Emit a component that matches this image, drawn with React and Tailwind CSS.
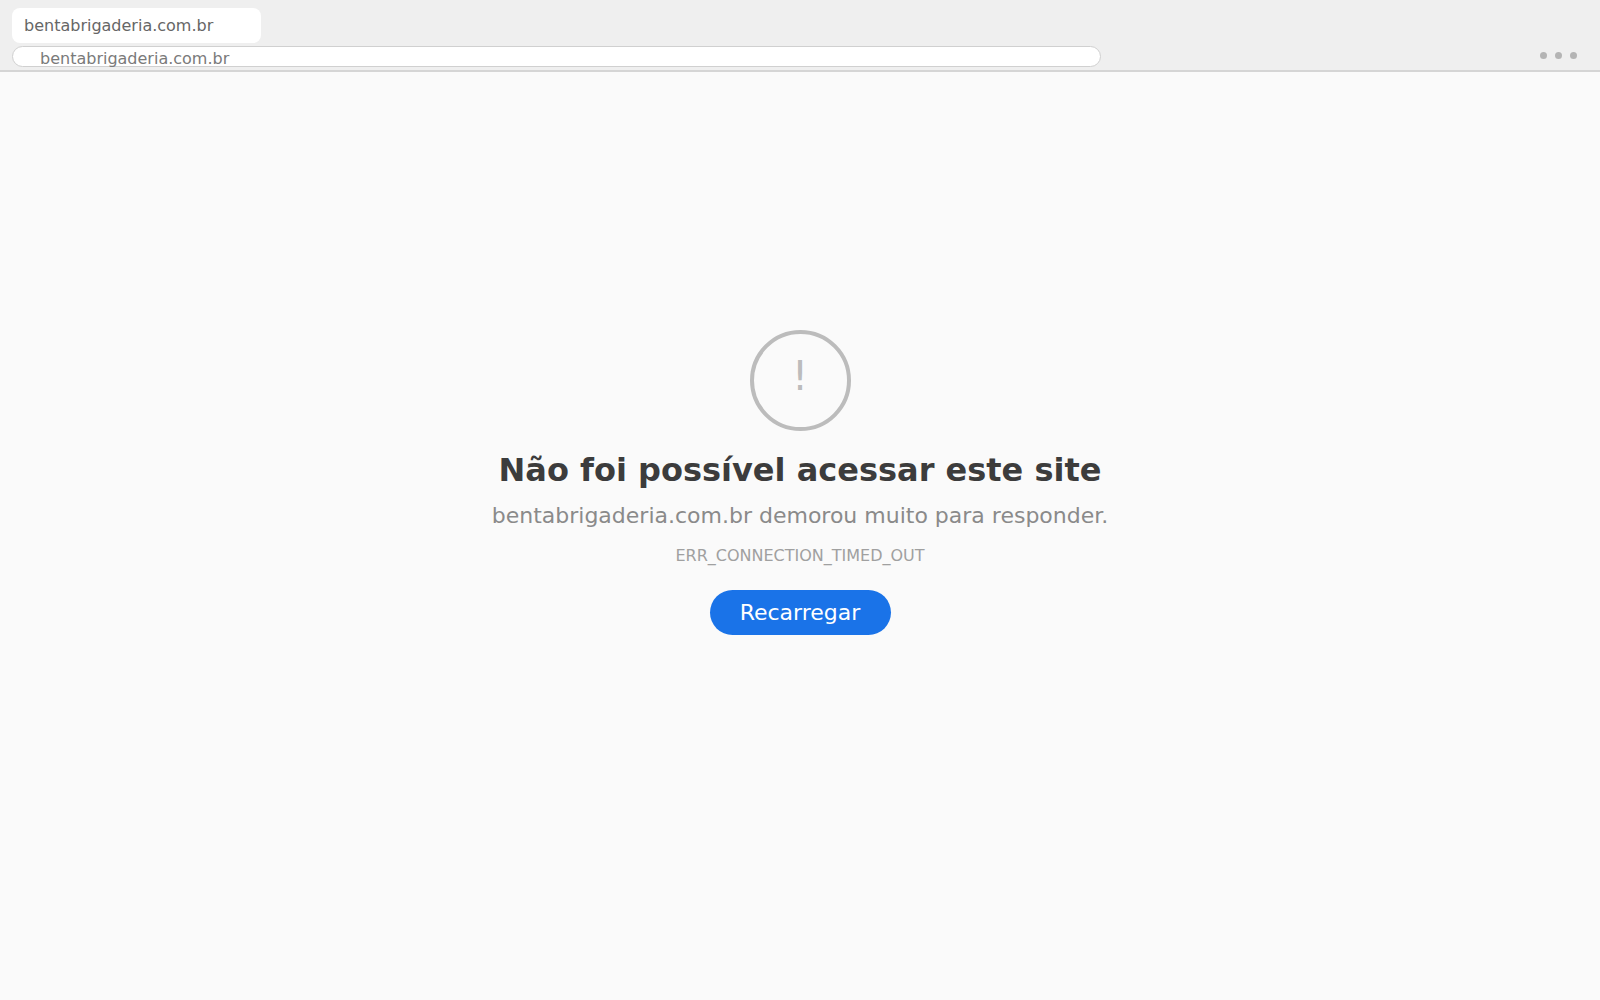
export default function App() {
  return (
    <div className="flex min-h-screen flex-col bg-[#fafafa] font-['DejaVu_Sans',sans-serif]">
      <header className="border-b-2 border-[#d5d5d5] bg-[#efefef] pt-2 pb-[3px]">
        <div role="tablist" className="flex px-3">
          <button
            type="button"
            role="tab"
            aria-selected="true"
            className="h-[35px] w-[249px] rounded-[8px] bg-white px-3 text-left text-[16px] text-[#666666]"
          >
            bentabrigaderia.com.br
          </button>
        </div>
        <div className="mt-[3px] flex items-start justify-between pr-[23px] pl-3">
          <div className="flex h-[21px] w-[69.6%] items-start rounded-full border border-[#d0d0d0] bg-white pl-[27px]">
            <input
              type="text"
              aria-label="Endereço"
              defaultValue="bentabrigaderia.com.br"
              className="h-[23px] w-full bg-transparent text-[16px] leading-[23px] text-[#7a7a7a] outline-none"
            />
          </div>
          <button type="button" aria-label="Menu" className="flex gap-2 pt-[6px]">
            <span className="size-[7px] rounded-full bg-[#b4b4b4]" />
            <span className="size-[7px] rounded-full bg-[#b4b4b4]" />
            <span className="size-[7px] rounded-full bg-[#b4b4b4]" />
          </button>
        </div>
      </header>

      <main className="flex flex-1 flex-col items-center px-4 pt-[258px] text-center">
        <div
          aria-hidden="true"
          className="flex size-[101px] items-center justify-center rounded-full border-4 border-[#bcbcbc] pb-[10px] text-[40px] leading-none text-[#bcbcbc]"
        >
          !
        </div>
        <h1 className="mt-[19px] text-[32px] leading-[40px] font-bold text-[#3c3c3c]">
          Não foi possível acessar este site
        </h1>
        <p className="mt-[10px] text-[22px] leading-[32px] text-[#8a8a8a]">
          bentabrigaderia.com.br demorou muito para responder.
        </p>
        <p className="mt-3 text-[16px] leading-[24px] text-[#a0a0a0]">
          ERR_CONNECTION_TIMED_OUT
        </p>
        <button
          type="button"
          className="mt-[22px] h-[45px] min-w-[181px] rounded-full bg-[#1a73e8] px-[30px] text-[22px] text-white"
        >
          Recarregar
        </button>
      </main>
    </div>
  );
}
